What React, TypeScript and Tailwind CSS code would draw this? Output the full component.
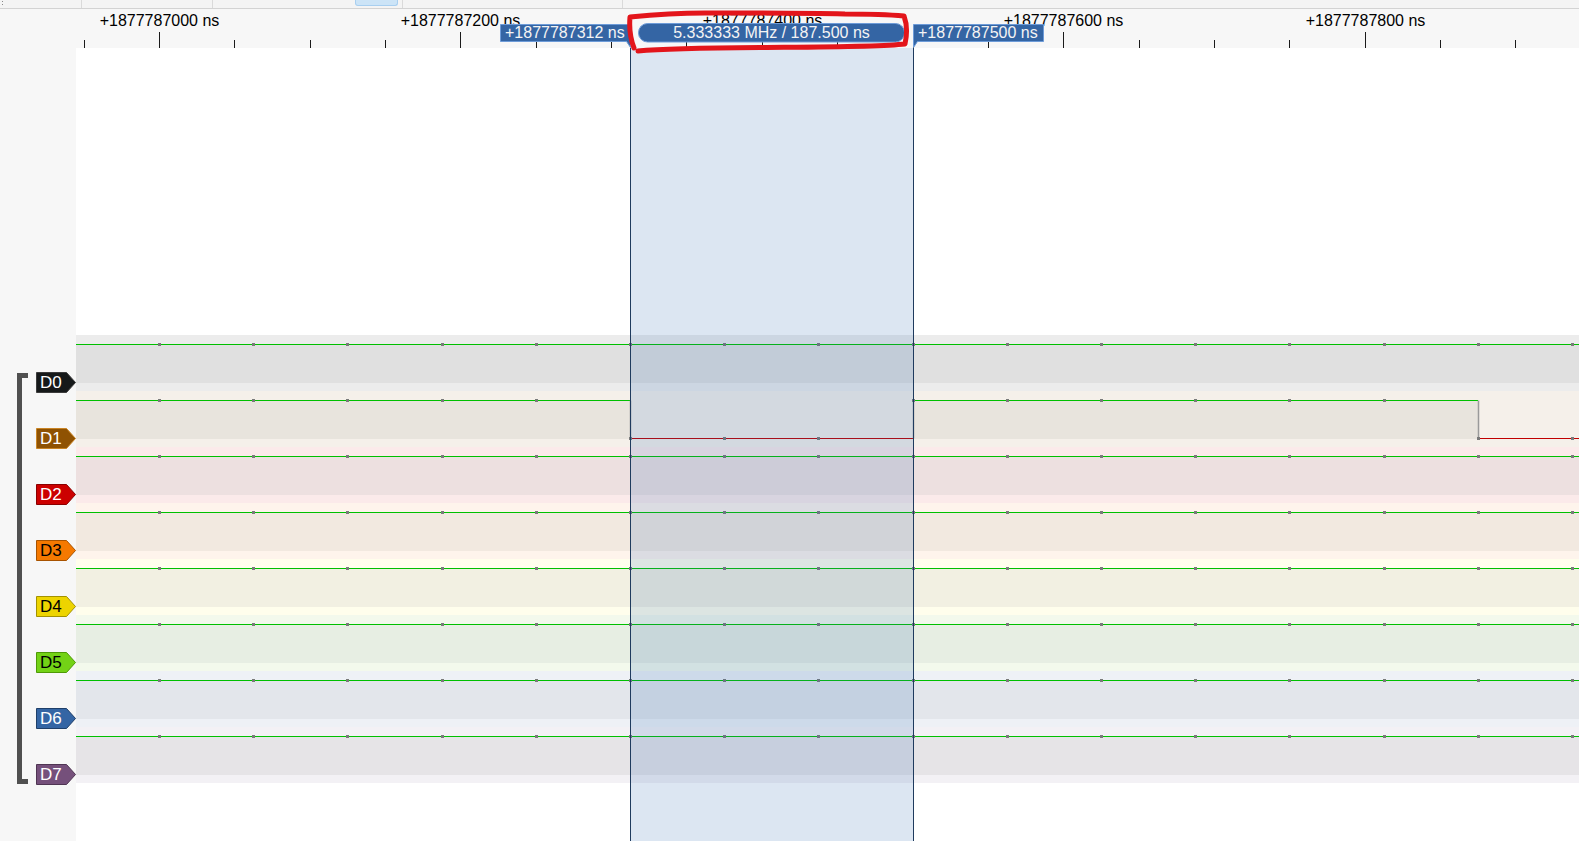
import React from 'react';

const VX = 76;
const T0 = 159.5;
const SP = 94.196;
const MN = 75.357;
const W = 1503;

type Seg = { a: number; b: number; hi: boolean };

const full: Seg[] = [{ a: 76, b: 1579, hi: true }];
const d1: Seg[] = [
  { a: 76, b: 630, hi: true },
  { a: 630, b: 913, hi: false },
  { a: 913, b: 1478, hi: true },
  { a: 1478, b: 1579, hi: false },
];

type RowDef = {
  name: string;
  c: string;
  s: string;
  t: string;
  bg: string;
  fill: string;
  segs: Seg[];
};

const rows: RowDef[] = [
  { name: 'D0', c: '#16191a', s: '#3c3c3c', t: 'text-white', bg: 'bg-[#ececec]', fill: '#e0e0e0', segs: full },
  { name: 'D1', c: '#8f5202', s: '#c98424', t: 'text-white', bg: 'bg-[#f5f0ea]', fill: '#e8e4dd', segs: d1 },
  { name: 'D2', c: '#cc0000', s: '#8a0000', t: 'text-white', bg: 'bg-[#fbeaea]', fill: '#ede0e0', segs: full },
  { name: 'D3', c: '#f57900', s: '#a85300', t: 'text-black', bg: 'bg-[#fef4ec]', fill: '#f2e9e0', segs: full },
  { name: 'D4', c: '#edd400', s: '#a39200', t: 'text-black', bg: 'bg-[#fffeec]', fill: '#f2f0e2', segs: full },
  { name: 'D5', c: '#73d216', s: '#4e9a06', t: 'text-black', bg: 'bg-[#f3f9ec]', fill: '#e7eee3', segs: full },
  { name: 'D6', c: '#3465a4', s: '#1f3f69', t: 'text-white', bg: 'bg-[#eef1f6]', fill: '#e3e6eb', segs: full },
  { name: 'D7', c: '#75507b', s: '#4f3553', t: 'text-white', bg: 'bg-[#f3f1f5]', fill: '#e6e4e7', segs: full },
];

const levelAt = (segs: Seg[], x: number) => {
  for (const s of segs) if (x >= s.a && x < s.b) return s.hi;
  return segs[segs.length - 1].hi;
};

const samples = Array.from({ length: 16 }, (_, k) => Math.floor(T0 + SP * k));

function Row({ r }: { r: RowDef }) {
  return (
    <div className={`relative h-[56px] ${r.bg}`}>
      <svg className="absolute left-0 top-0" width={W} height={56}>
        {r.segs
          .filter((s) => s.hi)
          .map((s, i) => (
            <rect key={'f' + i} x={s.a - VX} y={9} width={s.b - s.a} height={39} fill={r.fill} />
          ))}
        {r.segs.map((s, i) => (
          <line
            key={'l' + i}
            x1={s.a - VX}
            x2={s.b - VX}
            y1={s.hi ? 9.5 : 47.5}
            y2={s.hi ? 9.5 : 47.5}
            stroke={s.hi ? '#00c000' : '#c00000'}
            strokeWidth={1}
          />
        ))}
        {r.segs.slice(1).map((s, i) => (
          <line key={'e' + i} x1={s.a - VX + 0.5} x2={s.a - VX + 0.5} y1={9.5} y2={47.5} stroke="#9a9a9a" strokeWidth={1.5} />
        ))}
        {samples.map((x, k) => {
          const hi = levelAt(r.segs, x);
          return <rect key={'d' + k} x={x - 1 - VX} y={hi ? 8 : 46} width={3} height={3} fill="#7a7a7a" />;
        })}
      </svg>
    </div>
  );
}

function Label({ r }: { r: RowDef }) {
  return (
    <div className="relative w-[40px] h-[21px]">
      <svg className="absolute left-0 top-0" width={40} height={21}>
        <polygon points="0.5,0.5 30.5,0.5 39.5,10.5 30.5,20.5 0.5,20.5" fill={r.c} stroke={r.s} strokeWidth={1} />
      </svg>
      <span className={`absolute left-[4px] top-[2px] text-[17px] leading-none ${r.t}`}>{r.name}</span>
    </div>
  );
}

const ticks = Array.from({ length: 21 }, (_, i) => i - 1);

function Ruler() {
  return (
    <div className="relative h-[39px] bg-[#f7f7f7]">
      <svg className="absolute left-0 top-0" width={W} height={39}>
        {ticks.map((j) => {
          const px = Math.floor(T0 + MN * j) - VX + 0.5;
          const major = j % 4 === 0;
          return <line key={j} x1={px} x2={px} y1={major ? 23 : 31} y2={39} stroke="#1a1a1a" strokeWidth={1} />;
        })}
      </svg>
      {ticks
        .filter((j) => j >= 0 && j % 4 === 0)
        .map((j) => (
          <span
            key={j}
            className="absolute top-[4px] -translate-x-1/2 whitespace-nowrap text-[16px] leading-none text-black"
            style={{ left: Math.floor(T0 + MN * j) - VX + 0.5 }}
          >
            +{1877787000 + 50 * j} ns
          </span>
        ))}
    </div>
  );
}

export default function App() {
  return (
    <div className="relative w-[1579px] h-[841px] overflow-hidden bg-white font-['Liberation_Sans',Arial,sans-serif]">
      {/* toolbar bottom strip */}
      <div className="flex h-[9px] bg-[#f4f4f4] border-b border-[#d3d3d3]">
        <div className="relative w-[82px] border-r border-[#dadada]">
          <div className="absolute left-[2px] top-[1px] w-[1px] h-[1px] bg-[#8a8a8a]" />
          <div className="absolute left-[2px] top-[4px] w-[1px] h-[1px] bg-[#8a8a8a]" />
        </div>
        <div className="w-[131px] border-r border-[#dadada]" />
        <div className="w-[142px]" />
        <div className="w-[43px] h-[6px] bg-[#cce4f7] border border-t-0 border-[#a8cff0] rounded-b-[3px]" />
        <div className="w-[5px] border-r border-[#dadada]" />
        <div className="w-[220px] border-r border-[#dadada]" />
        <div className="flex-1" />
      </div>

      <div className="flex h-[832px]">
        {/* header / labels panel */}
        <div className="flex w-[76px] items-start bg-[#f7f7f7]">
          <div className="ml-[17px] mt-[364px] h-[411px] w-[11px] border-l-[5px] border-y-[5px] border-[#505050]" />
          <div className="ml-[8px] mt-[363px] flex flex-col gap-[35px]">
            {rows.map((r) => (
              <Label key={r.name} r={r} />
            ))}
          </div>
        </div>

        {/* ruler + view */}
        <div className="flex flex-1 flex-col">
          <Ruler />
          <div className="relative flex-1 overflow-hidden bg-white">
            <div className="h-[287px]" />
            {rows.map((r) => (
              <Row key={r.name} r={r} />
            ))}
            <div className="absolute top-0 bottom-0 left-[554px] w-[284px] border-x border-[#1f3b5e] bg-[rgba(38,100,174,0.16)]" />
          </div>
        </div>
      </div>

      {/* cursor flags */}
      <div className="pointer-events-none absolute left-0 top-0 h-[60px] w-[1579px]">
        <svg className="absolute left-0 top-0" width={1579} height={60}>
          <path d="M500.5 24.5 H630.5 V47.5 L626.5 41.5 H500.5 Z" fill="#3465a4" stroke="#6d9bd8" strokeWidth={1} />
          <rect x={638.5} y={23.5} width={266} height={18.5} rx={9} fill="#3465a4" stroke="#6d9bd8" strokeWidth={1} />
          <path d="M913.5 47.5 V24.5 H1043.5 V41.5 H917.5 Z" fill="#3465a4" stroke="#6d9bd8" strokeWidth={1} />
        </svg>
        <span className="absolute left-[505px] top-[25px] whitespace-nowrap text-[16px] leading-none text-[#f4f4f4]">
          +1877787312 ns
        </span>
        <div className="absolute left-[638px] top-[25px] w-[267px] text-center whitespace-nowrap text-[16px] leading-none text-[#f4f4f4]">
          5.333333 MHz / 187.500 ns
        </div>
        <span className="absolute left-[918px] top-[25px] whitespace-nowrap text-[16px] leading-none text-[#f4f4f4]">
          +1877787500 ns
        </span>
        <svg className="absolute left-0 top-0" width={1579} height={60}>
          <path
            d="M634 48 C631 40 629 28 630 17 C650 15 670 13 705 13 C750 13 800 13 845 14 C875 14 893 15 904 16 C907 24 907 35 905 44 C880 47 820 47 760 47.5 C700 48 660 49 638 51"
            fill="none"
            stroke="#e3151b"
            strokeWidth={5}
            strokeLinecap="round"
            strokeLinejoin="round"
          />
        </svg>
      </div>
    </div>
  );
}
